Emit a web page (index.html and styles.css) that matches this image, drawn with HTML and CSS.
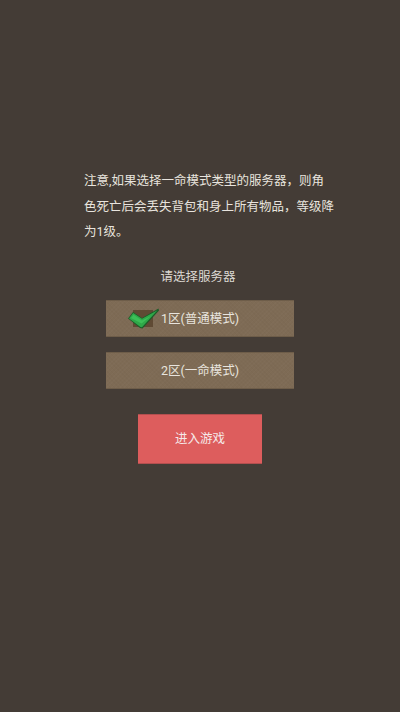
FILE: index.html
```html
<!DOCTYPE html>
<html lang="zh">
<head>
<meta charset="utf-8">
<title>选择服务器</title>
<link rel="stylesheet" href="styles.css">
</head>
<body>
<main class="screen">
  <p class="notice">注意,如果选择一命模式类型的服务器，则角色死亡后会丢失背包和身上所有物品，等级降为1级。</p>
  <p class="prompt">请选择服务器</p>
  <button class="server" type="button">
    <svg class="check" viewBox="0 0 32 21" aria-hidden="true">
      <rect x="5" y="2" width="20" height="17" fill="#5f4a34"/>
      <path d="M0 10.5 5 4 14 10 30.5 0.5 31 2.5 14.5 20.5 12 20Z" fill="#1c5c28"/>
      <path d="M1 10.5 5.2 5 14 10.8 29.5 2.2 14 19.2 12.5 19Z" fill="#2fa849"/>
      <path d="M3 10 5.5 6.8 14 12.6 23 8 13.5 15.5Z" fill="#3cbf58"/>
    </svg>
    1区(普通模式)
  </button>
  <button class="server" type="button">2区(一命模式)</button>
  <button class="enter" type="button">进入游戏</button>
</main>
</body>
</html>
```

FILE: styles.css
```css
* {
  box-sizing: border-box;
}

html,
body {
  margin: 0;
  height: 100%;
}

body {
  background: #443c36;
  color: #e8e4de;
  font-family: "Roboto", "Noto Sans CJK SC", sans-serif;
}

.screen {
  display: flex;
  flex-direction: column;
  align-items: center;
  height: 712px;
  padding-top: 168px;
}

.notice {
  width: 250px;
  margin: 0 0 0 18px;
  font-size: 12.5px;
  line-height: 25.5px;
}

.prompt {
  margin: 19px 4px 0 0;
  font-size: 12.5px;
  line-height: 25px;
  color: #dcd8d2;
}

.server {
  position: relative;
  width: 188px;
  height: 37px;
  margin: 0 0 15px;
  padding: 0 0 1px;
  border: 0;
  border-top: 1px solid #6e5d49;
  border-bottom: 1px solid #6e5d49;
  background-color: #7e6b55;
  background-image:
    repeating-linear-gradient(45deg, rgba(0, 0, 0, 0.02) 0 1px, transparent 1px 3px),
    repeating-linear-gradient(-45deg, rgba(255, 255, 255, 0.015) 0 1px, transparent 1px 3px);
  color: #e8e4de;
  font: inherit;
  font-size: 12.5px;
}

.prompt + .server {
  margin-top: 11px;
}

.check {
  position: absolute;
  left: 22px;
  top: 7px;
  width: 32px;
  height: 21px;
}

.enter {
  width: 124px;
  height: 50px;
  margin-top: 10px;
  padding: 0 0 2px;
  border: 0;
  border-top: 1px solid #b34f4f;
  border-bottom: 1px solid #b34f4f;
  background: #dd5d5d;
  color: #f5e9e9;
  font: inherit;
  font-size: 12.5px;
}
```
